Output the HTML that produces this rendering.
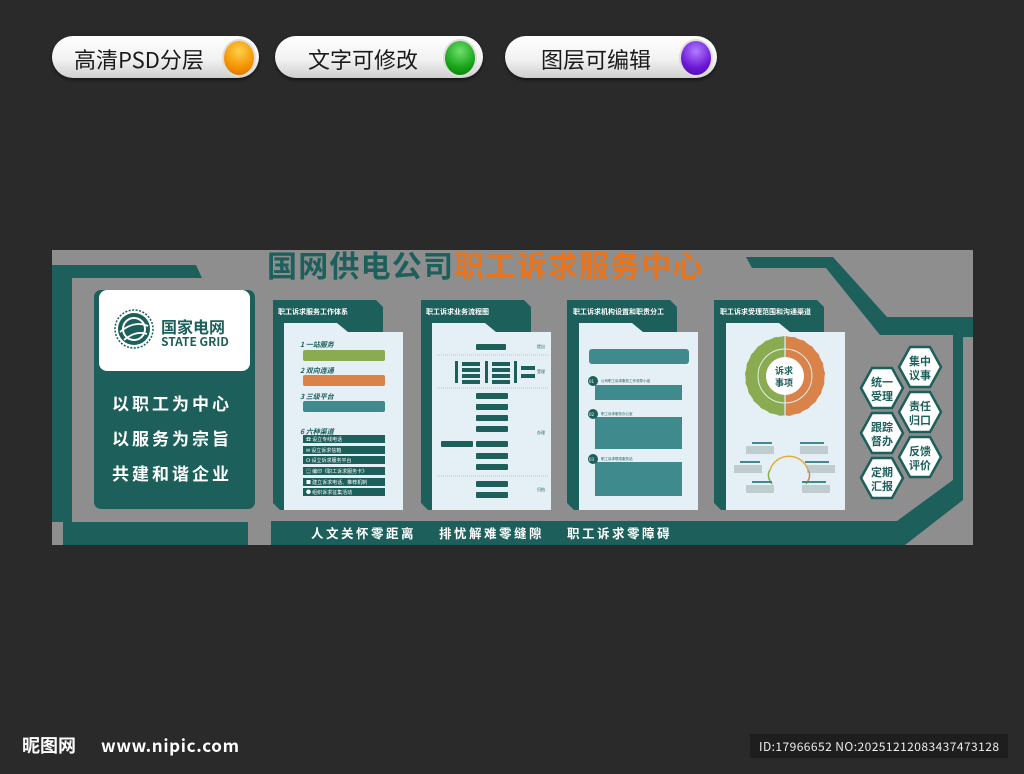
<!DOCTYPE html>
<html><head><meta charset="utf-8"><style>
html,body{margin:0;padding:0;background:#2a2a2a;width:1024px;height:774px;overflow:hidden;font-family:"Liberation Sans","Noto Sans CJK SC",sans-serif}
.pill{position:absolute;top:36px;height:42px;border-radius:21px;background:linear-gradient(#ffffff 0%,#f2f2f2 55%,#cfcfcf 100%);box-shadow:0 2px 3px rgba(0,0,0,.5)}
.pill span{position:absolute;top:7px;font-size:22px;color:#1a1a1a;font-family:"Noto Sans CJK SC",sans-serif}
.dot{position:absolute;top:3px;width:30px;height:34px;border-radius:50%;border:2px solid #ddd}
svg text{font-family:"Noto Sans CJK SC","Liberation Sans",sans-serif}
</style></head><body>
<div class="pill" style="left:52px;width:207px"><span style="left:22px">高清PSD分层</span><div class="dot" style="left:170px;background:radial-gradient(circle at 50% 30%,#ffd04a,#f39200 60%,#d86a00)"></div></div>
<div class="pill" style="left:275px;width:208px"><span style="left:33px">文字可修改</span><div class="dot" style="left:168px;background:radial-gradient(circle at 50% 30%,#6fe06f,#17a317 60%,#0b7a0b)"></div></div>
<div class="pill" style="left:505px;width:212px"><span style="left:36px">图层可编辑</span><div class="dot" style="left:174px;background:radial-gradient(circle at 50% 30%,#b27cff,#6a16d4 60%,#4c0aa0)"></div></div>

<svg width="1024" height="774" style="position:absolute;left:0;top:0" xmlns="http://www.w3.org/2000/svg">
<rect x="52" y="250" width="921" height="295" fill="#8e8e8e"/>
<!-- left frame -->
<polygon points="52,265 196,265 202,278 72,278 72,522 52,522" fill="#1c5f5b"/>
<rect x="63" y="522" width="185" height="23" fill="#1c5f5b"/>
<!-- right frame -->
<polygon points="746,257 833,257 887,317 973,317 973,337 963,337 963,500 905,545 271,545 271,521 897,521 953,480 953,335 880,335 826,268 752,268" fill="#1c5f5b"/>
<!-- left main panel -->
<rect x="94" y="290" width="161" height="219" rx="7" fill="#1c5f5b"/>
<rect x="99" y="290" width="151" height="81" rx="8" fill="#fff"/>
<circle cx="134" cy="329" r="16" fill="#1c5f5b"/>
<circle cx="134" cy="329" r="11" fill="none" stroke="#fff" stroke-width="2"/>
<path d="M120 332 Q134 320 148 326 M124 340 Q136 330 147 334" stroke="#fff" stroke-width="1.8" fill="none"/>
<circle cx="134" cy="329" r="19" fill="none" stroke="#1c5f5b" stroke-width="1.5" stroke-dasharray="2 1.5"/>
<text x="161" y="333" font-size="16" font-weight="bold" fill="#1c5f5b">国家电网</text>
<text x="161" y="346" font-size="12" font-weight="bold" fill="#1c5f5b" font-family="Liberation Serif">STATE GRID</text>
<g fill="#fff" font-size="17" font-weight="bold" letter-spacing="3">
<text x="112" y="410">以职工为中心</text>
<text x="112" y="445">以服务为宗旨</text>
<text x="112" y="480">共建和谐企业</text>
</g>
<!-- title -->
<text x="267" y="277" font-size="30" font-weight="bold" fill="#1c5f5b" letter-spacing="1.2">国网供电公司<tspan fill="#e8741e">职工诉求服务中心</tspan></text>
<!-- bottom bar text -->
<g fill="#fff" font-size="12.5" font-weight="bold" letter-spacing="2.5">
<text x="311" y="538">人文关怀零距离</text>
<text x="439" y="538">排忧解难零缝隙</text>
<text x="567" y="538">职工诉求零障碍</text>
</g>
<!-- cards -->
<g id="cards">
<polygon points="273,300 376,300 383,307 383,332 284,332 284,510 280,510 273,503" fill="#1c5f5b"/>
<polygon points="284,323 337,323 348,332 403,332 403,510 284,510" fill="#e4eff6"/>
<text x="278" y="314" font-size="7" font-weight="bold" fill="#fff">职工诉求服务工作体系</text>

<polygon points="421,300 524,300 531,307 531,332 432,332 432,510 428,510 421,503" fill="#1c5f5b"/>
<polygon points="432,323 485,323 496,332 551,332 551,510 432,510" fill="#e4eff6"/>
<text x="426" y="314" font-size="7" font-weight="bold" fill="#fff">职工诉求业务流程图</text>

<polygon points="567,300 670,300 677,307 677,332 579,332 579,510 574,510 567,503" fill="#1c5f5b"/>
<polygon points="579,323 632,323 643,332 698,332 698,510 579,510" fill="#e4eff6"/>
<text x="573" y="314" font-size="7" font-weight="bold" fill="#fff">职工诉求机构设置和职责分工</text>

<polygon points="714,300 817,300 824,307 824,332 726,332 726,510 721,510 714,503" fill="#1c5f5b"/>
<polygon points="726,323 779,323 790,332 845,332 845,510 726,510" fill="#e4eff6"/>
<text x="720" y="314" font-size="7" font-weight="bold" fill="#fff">职工诉求受理范围和沟通渠道</text>
</g>
<!-- card1 content -->
<g font-size="7" font-weight="bold" fill="#1c5f5b" font-style="italic">
<text x="300" y="347">1 一站服务</text>
<text x="300" y="373">2 双向连通</text>
<text x="300" y="399">3 三级平台</text>
<text x="300" y="434">6 六种渠道</text>
</g>
<rect x="303" y="350" width="82" height="11" rx="2" fill="#8aab4f"/>
<rect x="303" y="375" width="82" height="11" rx="2" fill="#d9824a"/>
<rect x="303" y="401" width="82" height="11" rx="2" fill="#3f8a8c"/>
<g fill="#1c5f5b">
<rect x="303" y="435" width="82" height="8"/><rect x="303" y="446" width="82" height="8"/><rect x="303" y="456" width="82" height="8"/><rect x="303" y="467" width="82" height="8"/><rect x="303" y="478" width="82" height="8"/><rect x="303" y="488" width="82" height="8"/>
</g>
<g fill="#fff" font-size="5">
<text x="306" y="441">☎ 设立专线电话</text><text x="306" y="452">✉ 设立诉求信箱</text><text x="306" y="462">☊ 设立诉求服务平台</text><text x="306" y="473">▤ 编印《职工诉求服务卡》</text><text x="306" y="484">■ 建立诉求电话、推荐机制</text><text x="306" y="494">● 组织诉求征集活动</text>
</g>
<!-- card2 content -->
<g fill="#1c5f5b">
<rect x="476" y="344" width="30" height="6" rx="1"/>
<rect x="455" y="361" width="3" height="22"/><rect x="485" y="361" width="3" height="22"/><rect x="514" y="361" width="3" height="22"/>
<rect x="462" y="362" width="18" height="4"/><rect x="462" y="368" width="18" height="4"/><rect x="462" y="374" width="18" height="4"/><rect x="462" y="380" width="18" height="4"/>
<rect x="492" y="362" width="18" height="4"/><rect x="492" y="368" width="18" height="4"/><rect x="492" y="374" width="18" height="4"/><rect x="492" y="380" width="18" height="4"/>
<rect x="521" y="366" width="14" height="4"/><rect x="521" y="374" width="14" height="4"/>
<rect x="476" y="393" width="32" height="6" rx="1"/><rect x="476" y="404" width="32" height="6" rx="1"/><rect x="476" y="415" width="32" height="6" rx="1"/><rect x="476" y="426" width="32" height="6" rx="1"/>
<rect x="441" y="441" width="32" height="6" rx="1"/><rect x="476" y="441" width="32" height="6" rx="1"/><rect x="476" y="453" width="32" height="6" rx="1"/><rect x="476" y="464" width="32" height="6" rx="1"/>
<rect x="476" y="481" width="32" height="6" rx="1"/><rect x="476" y="492" width="32" height="6" rx="1"/>
</g>
<g stroke="#7a9fa8" stroke-width="0.6" stroke-dasharray="1 1"><line x1="437" y1="355" x2="548" y2="355"/><line x1="437" y1="388" x2="548" y2="388"/><line x1="437" y1="476" x2="548" y2="476"/></g>
<g fill="#1c5f5b" font-size="4"><text x="537" y="348">提出</text><text x="537" y="373">受理</text><text x="537" y="434">办理</text><text x="537" y="491">归档</text></g>
<!-- card3 content -->
<rect x="589" y="349" width="100" height="15" rx="3" fill="#3f8a8c"/>
<g fill="#3f8a8c"><rect x="595" y="385" width="87" height="15"/><rect x="595" y="417" width="87" height="32"/><rect x="595" y="462" width="87" height="34"/></g>
<g fill="#1c5f5b"><circle cx="593" cy="381" r="5"/><circle cx="593" cy="414" r="5"/><circle cx="593" cy="459" r="5"/></g>
<g fill="#fff" font-size="4.5"><text x="589" y="383">01</text><text x="589" y="416">02</text><text x="589" y="461">03</text></g>
<g fill="#1c5f5b" font-size="3.5"><text x="601" y="382">公司职工诉求服务工作领导小组</text><text x="601" y="415">职工诉求服务办公室</text><text x="601" y="460">职工诉求联络服务站</text></g>
<!-- card4 wheel -->
<path d="M785 336 A40 40 0 0 0 785 416 Z" fill="#8aab4f"/>
<path d="M785 336 A40 40 0 0 1 785 416 Z" fill="#d9824a"/>
<circle cx="785" cy="376" r="40" fill="none" stroke="#e4eff6" stroke-width="1" stroke-dasharray="6 4"/>
<line x1="785" y1="334" x2="785" y2="418" stroke="#e4eff6" stroke-width="1.2"/>
<circle cx="785" cy="376" r="27" fill="none" stroke="#e4eff6" stroke-width="1"/>
<circle cx="785" cy="376" r="19" fill="#fff"/>
<text x="775" y="374" font-size="9" font-weight="bold" fill="#1c5f5b">诉求</text>
<text x="775" y="386" font-size="9" font-weight="bold" fill="#1c5f5b">事项</text>
<path d="M770 470 A20 20 0 0 1 808 470" fill="none" stroke="#e2b030" stroke-width="1.5"/>
<path d="M770 470 Q766 476 772 484" fill="none" stroke="#8aab4f" stroke-width="1.5"/>
<path d="M808 470 Q812 476 806 484" fill="none" stroke="#d9824a" stroke-width="1.5"/>
<g fill="#3f8a8c"><rect x="752" y="442" width="20" height="2"/><rect x="800" y="442" width="24" height="2"/><rect x="740" y="461" width="20" height="2"/><rect x="805" y="461" width="24" height="2"/><rect x="752" y="481" width="20" height="2"/><rect x="802" y="481" width="24" height="2"/></g>
<g fill="#9aa" ><rect x="746" y="446" width="28" height="8" opacity=".5"/><rect x="800" y="446" width="28" height="8" opacity=".5"/><rect x="734" y="465" width="28" height="8" opacity=".5"/><rect x="807" y="465" width="28" height="8" opacity=".5"/><rect x="746" y="485" width="28" height="8" opacity=".5"/><rect x="802" y="485" width="28" height="8" opacity=".5"/></g>
<!-- hexagons -->
<g fill="#fff" stroke="#1c5f5b" stroke-width="2.5">
<polygon points="872,368 892,368 903,388 892,408 872,408 861,388"/>
<polygon points="872,413 892,413 903,433 892,453 872,453 861,433"/>
<polygon points="872,458 892,458 903,478 892,498 872,498 861,478"/>
<polygon points="910,347 930,347 941,367 930,387 910,387 899,367"/>
<polygon points="910,392 930,392 941,412 930,432 910,432 899,412"/>
<polygon points="910,437 930,437 941,457 930,477 910,477 899,457"/>
</g>
<g fill="#1c5f5b" font-size="11" font-weight="bold">
<text x="871" y="386">统一</text><text x="871" y="400">受理</text>
<text x="871" y="431">跟踪</text><text x="871" y="445">督办</text>
<text x="871" y="476">定期</text><text x="871" y="490">汇报</text>
<text x="909" y="365">集中</text><text x="909" y="379">议事</text>
<text x="909" y="410">责任</text><text x="909" y="424">归口</text>
<text x="909" y="455">反馈</text><text x="909" y="469">评价</text>
</g>
<!-- footer -->
<text x="22" y="752" font-size="18" font-weight="bold" fill="#fff">昵图网</text>
<text x="101" y="752" font-size="17" font-weight="bold" fill="#fff" font-family="Liberation Sans" textLength="138">www.nipic.com</text>
<rect x="750" y="734" width="258" height="24" fill="#1e1e1e"/>
<text x="759" y="751" font-size="12" fill="#eee" font-family="Liberation Sans" textLength="240">ID:17966652 NO:20251212083437473128</text>
</svg>
</body></html>
